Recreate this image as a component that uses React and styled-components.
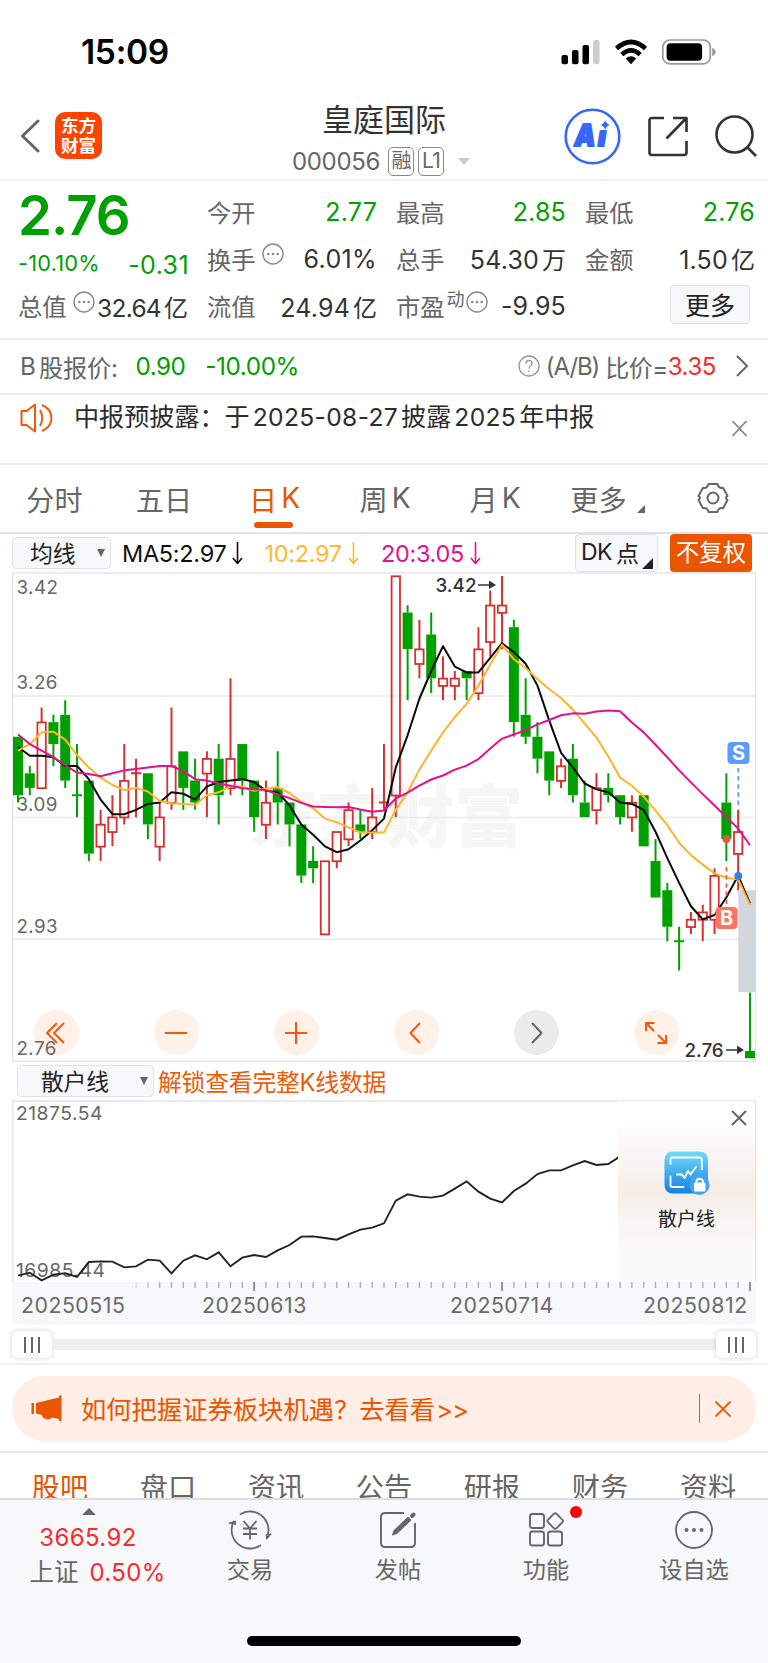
import React from 'react'
import styled, { createGlobalStyle, css } from 'styled-components'

const GREEN = '#00a000'
const RED = '#fa2a2d'
const ORANGE = '#eb5500'
const GRAY = '#666'
const DARK = '#333'

const GlobalStyle = createGlobalStyle`
    * { box-sizing: border-box; }
    body {
        margin: 0;
        background: white;
        font-family: Inter, "Noto Sans CJK SC", sans-serif;
        color: ${DARK};
    }
    svg { display: block; flex: none; }
`

const Page = styled.div`
    width: 768px;
    height: 1663px;
    overflow: hidden;
    display: flex;
    flex-direction: column;
    white-space: nowrap;
`

/* ---------- status bar ---------- */

const StatusBar = styled.div`
    height: 88px;
    flex: none;
    padding: 15px 52px 0 81px;
    display: flex;
    align-items: center;
    justify-content: space-between;
`
const Clock = styled.div`
    font-size: 33.5px;
    font-weight: 600;
    letter-spacing: -0.3px;
    color: black;
`

/* ---------- header ---------- */

const HeaderBar = styled.header`
    height: 93px;
    flex: none;
    border-bottom: 2px solid #f0f0f0;
    display: grid;
    grid-template-columns: 250px 1fr 250px;
`
const HeaderLeft = styled.div`
    display: flex;
    align-items: center;
    padding: 4px 0 0 20px;
    gap: 15px;
`
const AppLogo = styled.div`
    width: 47px;
    height: 47px;
    border-radius: 10px;
    background: #ff4400;
    color: white;
    font-size: 17.5px;
    font-weight: 700;
    line-height: 19.5px;
    padding-top: 4px;
    text-align: center;
`
const Heading = styled.div`
    display: flex;
    flex-direction: column;
    align-items: center;
`
const StockName = styled.div`
    font-size: 31px;
    line-height: 40px;
    margin-top: 12px;
`
const StockCode = styled.div`
    display: flex;
    align-items: center;
    height: 30px;
    margin-top: 6px;
    padding-right: 6px;
    font-size: 24px;
    letter-spacing: -0.3px;
    color: ${GRAY};
`
const Tag = styled.span`
    width: 26px;
    height: 29px;
    margin-left: ${p => p.$gap || 4}px;
    border: 1.5px solid #888;
    border-radius: 5px;
    font-size: ${p => p.$size || 20}px;
    letter-spacing: -0.5px;
    line-height: 26px;
    text-align: center;
`
const Caret = styled.span`
    margin-left: 14px;
    border: 6.5px solid transparent;
    border-top: 7px solid #ccc;
    border-bottom: 0;
`
const HeaderRight = styled.div`
    display: flex;
    align-items: center;
    justify-content: flex-end;
    padding: 5px 11px 0 0;
    gap: 27px;
`

/* ---------- quote ---------- */

const QuoteGrid = styled.section`
    height: 159px;
    flex: none;
    border-bottom: 2px solid #f0f0f0;
    padding: 7px 13px 0 18px;
    display: grid;
    grid-template-columns: 170px repeat(3, 170px);
    column-gap: 19px;
`
const QuoteColumn = styled.div`
    display: grid;
    grid-template-rows: repeat(3, 47.3px);
`
const PriceColumn = styled.div`
    display: grid;
    grid-template-rows: 54px 40.6px 47.3px;
`
const Price = styled.div`
    font-size: 54.5px;
    line-height: 54px;
    font-weight: 600;
    letter-spacing: -1px;
    color: ${GREEN};
`
const ChangeRow = styled.div`
    display: flex;
    justify-content: space-between;
    align-items: center;
    color: ${GREEN};
    font-size: 25px;
    letter-spacing: 0.4px;
    small { font-size: 21.8px; letter-spacing: 0.2px; padding-top: 2px; }
    span { padding-top: 6px; margin-right: -1px; }
`
const Cell = styled.div`
    display: flex;
    justify-content: space-between;
    align-items: center;
`
const Label = styled.span`
    display: flex;
    align-items: center;
    font-size: 24.3px;
    padding-bottom: 1px;
    color: ${GRAY};
    sup { font-size: 18px; margin: -12px 0 0 2px; line-height: 20px; }
    svg { margin: -8px 0 0 ${p => p.$iconGap ?? 6}px; }
`
const Value = styled.span`
    font-size: ${p => p.$size || 25}px;
    letter-spacing: ${p => p.$spacing ?? 0.2}px;
    color: ${p => p.$color || DARK};
    i { font-style: normal; margin-left: 3px; letter-spacing: 0; font-size: 24px; }
`
const MoreButton = styled.button`
    width: 80px;
    height: 39px;
    margin: 2px 5px 0 auto;
    padding: 0 0 2px;
    border: 1.5px solid #dde0e6;
    border-radius: 4px;
    background: #f7f8fa;
    font: 25px "Noto Sans CJK SC", sans-serif;
    color: #222;
`

const BShareRow = styled.section`
    height: 55px;
    flex: none;
    border-bottom: 2px solid #eee;
    padding: 0 19px 1px 20px;
    display: flex;
    align-items: center;
    font-size: 24.3px;
    color: ${GRAY};
`
const BPart = styled.span`
    margin-left: ${p => p.$gap}px;
    letter-spacing: ${p => p.$spacing ?? 0}px;
    color: ${p => p.$color || GRAY};
`
const Ratio = styled.div`
    margin-left: auto;
    display: flex;
    align-items: center;
    font-size: 24px;
    letter-spacing: -0.6px;
`

const Notice = styled.section`
    height: 70px;
    flex: none;
    border-bottom: 2px solid #eee;
    padding: 0 20px;
    display: flex;
    color: #2c2c2c;
    font-size: 25.1px;
    line-height: 45px;
    p { margin: 0 auto 0 20px; }
    time { margin: 0 3px; font-size: 24.6px; letter-spacing: 0.35px; }
`

/* ---------- period tabs ---------- */

const PeriodTabs = styled.nav`
    height: 69px;
    flex: none;
    border-bottom: 2px solid #dfe3e8;
    display: grid;
    grid-template-columns: 109px 110px 111px 110px 110px 108px 110px;
`
const PeriodTab = styled.div`
    position: relative;
    display: flex;
    align-items: center;
    justify-content: center;
    padding: 0 0 1px ${p => p.$shift || 0}px;
    font-size: 28.2px;
    gap: 4px;
    color: ${p => p.$active ? ORANGE : GRAY};
    ${p => p.$active && css`
        &::after {
            content: "";
            position: absolute;
            left: 35px;
            bottom: 4px;
            width: 39px;
            height: 6px;
            border-radius: 3px;
            background: ${ORANGE};
        }
    `}
`
const Corner = styled.i`
    align-self: flex-end;
    border-left: ${p => p.$size}px solid transparent;
    border-bottom: ${p => p.$size}px solid ${p => p.$color};
    margin: 0 0 ${p => p.$lift || 0}px ${p => p.$gap || 0}px;
`

/* ---------- k-line ---------- */

const Toolbar = styled.div`
    height: 38px;
    flex: none;
    padding: 0 16px 0 12px;
    display: flex;
    align-items: center;
`
const Picker = styled.div`
    width: ${p => p.$width}px;
    height: 32px;
    flex: none;
    padding: 0 5px 2px ${p => p.$inset}px;
    display: flex;
    align-items: center;
    justify-content: space-between;
    border: 1.5px solid #dfe2e8;
    border-radius: 4px;
    background: #f7f8fa;
    color: #222;
    font-size: 22.8px;
`
const Down = styled.i`
    border: 4.5px solid transparent;
    border-top: 8px solid #666;
    border-bottom: 0;
    margin-top: 2px;
`
const MaLabel = styled.span`
    display: flex;
    align-items: center;
    margin-left: ${p => p.$gap}px;
    color: ${p => p.$color};
    font-size: 23.5px;
    letter-spacing: ${p => p.$spacing}px;
    svg { margin-left: 6px; }
`
const DkButton = styled.div`
    width: 83px;
    height: 38px;
    margin-left: auto;
    padding: 0 4px 2px 5px;
    display: flex;
    align-items: center;
    border: 1.5px solid #dfe2e8;
    border-radius: 4px;
    background: #f7f8fa;
    font-size: 23px;
    color: #222;
    span { letter-spacing: -0.5px; margin-right: 4px; }
    i { margin-left: auto; }
`
const AdjustButton = styled.div`
    width: 82px;
    height: 38px;
    margin-left: 12px;
    border-radius: 4px;
    background: ${ORANGE};
    color: white;
    font-size: 23.3px;
    line-height: 38px;
    text-align: center;
`
const ChartBox = styled.div`
    position: relative;
    height: 490px;
    flex: none;
`
const NavButtons = styled.div`
    position: absolute;
    left: 33.5px;
    bottom: 7px;
    display: flex;
    gap: 75.1px;
`
const RoundButton = styled.div`
    width: 45px;
    height: 45px;
    border-radius: 50%;
    display: flex;
    align-items: center;
    justify-content: center;
    background: ${p => p.$muted ? 'rgba(120, 120, 120, 0.15)' : 'rgba(255, 85, 0, 0.09)'};
    color: ${p => p.$muted ? '#666' : '#f05a0a'};
`
const SubToolbar = styled.div`
    height: 38px;
    flex: none;
    padding: 0 17px 0 17px;
    display: flex;
    align-items: center;
    gap: 4px;
    font-size: 23.8px;
    letter-spacing: -0.2px;
    color: #f05a0a;
    p { margin: 0; padding-bottom: 2px; }
`
const SubChart = styled.div`
    position: relative;
    height: 182px;
    flex: none;
`
const LockPanel = styled.div`
    position: absolute;
    left: 618px;
    top: 1px;
    width: 137px;
    height: 181px;
    padding: 50px 0 0;
    display: flex;
    flex-direction: column;
    align-items: center;
    gap: 11px;
    background: linear-gradient(#fefefe 12%, #f9f6f4 30%, #f4ede8 50%, #f8f5f2 65%, #fbfbfb 85%);
    color: #222;
    font-size: 19px;
    line-height: 28px;
`
const ClosePanel = styled.div`
    position: absolute;
    right: 21px;
    top: 10px;
`
const DateAxis = styled.div`
    position: relative;
    height: 43px;
    flex: none;
    margin: 0 12px;
    background: #f7f8fa;
`
const Dates = styled.div`
    position: absolute;
    inset: 10px 9px 0 9px;
    display: grid;
    grid-template-columns: 181px 248px 193px 1fr;
    font-size: 21.3px;
    letter-spacing: 0.5px;
    line-height: 27px;
    color: #6a6a6a;
`
const RangeBar = styled.div`
    height: 40px;
    flex: none;
    border-bottom: 2px solid #f0f0f0;
    padding: 1px 12px 0;
    display: flex;
    align-items: center;
`
const Track = styled.div`
    flex: 1;
    height: 11px;
    background: #f0f0f3;
`
const Handle = styled.div`
    width: 40px;
    height: 27px;
    border-radius: 6px;
    background: white;
    box-shadow: 0 0 5px rgba(0, 0, 0, 0.18);
    display: flex;
    align-items: center;
    justify-content: center;
    gap: 5px;
    i { width: 2px; height: 16px; background: #666; }
`

/* ---------- bottom ---------- */

const Banner = styled.div`
    height: 65px;
    flex: none;
    margin: 11px 12px 10px;
    padding: 0 25px 0 19px;
    border-radius: 32px;
    background: #feeee6;
    display: flex;
    align-items: center;
    color: ${ORANGE};
    font-size: 25.3px;
    p { margin: 0 auto 0 19px; padding-bottom: 1px; }
    q { quotes: none; margin-left: 1px; letter-spacing: -0.6px; }
`
const Rule = styled.i`
    width: 1.5px;
    height: 29px;
    margin-right: 15px;
    background: ${ORANGE};
`
const InfoTabs = styled.nav`
    height: 47px;
    flex: none;
    overflow: hidden;
    border-top: 2px solid #e6e8ec;
    padding: 14px 6px 0 6px;
    display: grid;
    grid-template-columns: repeat(7, 108px);
    text-align: center;
    font-size: 28.2px;
    line-height: 42px;
    color: ${GRAY};
    span:first-child { color: ${ORANGE}; }
`
const BottomBar = styled.footer`
    flex: 1;
    border-top: 2px solid #dcdee1;
    background: #f7f8fa;
    display: flex;
    flex-direction: column;
    align-items: center;
    justify-content: space-between;
    padding-bottom: 17px;
`
const Actions = styled.div`
    display: grid;
    grid-template-columns: 176px repeat(4, 148px);
`
const IndexBox = styled.div`
    display: flex;
    flex-direction: column;
    align-items: center;
    padding-top: 8px;
    font-size: 24px;
    letter-spacing: 0.35px;
    line-height: 34px;
    color: ${RED};
    div:last-child { padding-left: 19px; }
    em { font-style: normal; color: ${GRAY}; font-size: 24.5px; margin-right: 11px; letter-spacing: 0; }
`
const Up = styled.i`
    border: 7px solid transparent;
    border-bottom: 7px solid #666;
    border-top: 0;
    margin: 0 0 6px 1px;
`
const Action = styled.div`
    position: relative;
    display: flex;
    flex-direction: column;
    align-items: center;
    padding-top: 10px;
    gap: 4px;
    font-size: 23.2px;
    line-height: 32px;
    color: ${GRAY};
`
const Dot = styled.i`
    position: absolute;
    left: 98px;
    top: 6px;
    width: 12px;
    height: 12px;
    border-radius: 50%;
    background: #f00;
`
const HomeBar = styled.div`
    width: 274px;
    height: 10px;
    border-radius: 5px;
    background: black;
`

// [open, close, high, low] in cents, a trailing 1 marks a flat day drawn as rising
const candles = [
    [320, 312, 320, 311], [315, 313, 316, 312], [313, 322, 324, 313], [322, 319, 323, 316],
    [323, 314, 325, 313], [312, 312, 319, 309], [314, 304, 314, 303], [305, 308, 310, 303],
    [307, 309, 312, 305], [309, 314, 319, 308], [315, 315, 317, 309, 1], [315, 308, 315, 306],
    [305, 309, 311, 303], [311, 316, 324, 310], [318, 313, 318, 310], [314, 311, 317, 310],
    [315, 317, 318, 309], [317, 312, 319, 308], [313, 317, 328, 312], [319, 314, 319, 312],
    [314, 309, 314, 307], [308, 311, 314, 306], [313, 311, 318, 308], [311, 308, 311, 305],
    [308, 301, 308, 300], [303, 302, 305, 300], [293, 303, 303, 293], [303, 307, 307, 302],
    [306, 310, 311, 305], [308, 307, 310, 306], [307, 309, 313, 306], [311, 311, 319, 310, 1],
    [312, 342, 342, 309], [337, 332, 338, 325], [330, 332, 336, 328], [334, 328, 337, 326],
    [327, 328, 331, 325], [327, 328, 329, 325], [329, 328, 329, 325], [326, 332, 335, 325],
    [333, 338, 340, 331], [337, 338, 342, 332], [335, 322, 336, 320], [323, 320, 328, 319],
    [320, 317, 322, 315], [318, 314, 318, 312], [314, 316, 317, 313], [317, 312, 319, 311],
    [311, 309, 314, 309], [310, 313, 315, 308], [313, 312, 315, 311], [312, 309, 312, 308],
    [309, 311, 312, 307], [312, 305, 312, 305], [303, 298, 306, 298], [299, 294, 300, 292],
    [292, 292, 294, 288], [294, 295, 296, 293], [295, 296, 297, 292], [295, 301, 302, 293],
    [311, 306, 315, 303], [304, 307, 310, 299], [277, 276, 285, 276],
]

// averages for the days whose window starts before the first candle
const ma5Head = [318.6, 317.4, 317.4, 317.2]
const ma10Head = [318.1, 319, 320.6, 320.7, 319.6, 317.5, 315.8, 314.4, 313.4]
const ma20Head = [320.3, 319, 318.1, 317.2, 316.1, 315.1, 314.9, 314.6, 315, 315.4, 315.6, 315.8, 316, 316, 315.3, 314.2, 314, 313.6, 313.3]

const retail = [
    647, 638, 661, 644, 640, 651, 606, 604, 605, 622, 619, 599, 602, 640, 602, 586, 598, 577, 619, 593, 585,
    591, 571, 555, 530, 529, 534, 539, 523, 509, 503, 490, 422, 403, 410, 413, 407, 386, 364, 395, 416, 427,
    393, 371, 342, 331, 331, 316, 303, 315, 312, 289,
]

const px = i => 18 + i * 11.806
const py = cents => 4 + (342 - cents) * 7.307

const movingAverage = (n, head) => candles.map((_, i) => {
    if (i < head.length) return head[i]
    return candles.slice(i - n + 1, i + 1).reduce((sum, c) => sum + c[1], 0) / n
})
const toPoints = values => values.map((v, i) => `${px(i)},${py(v)}`).join(' ')

const Candle = ({ i, data }) => {
    const [open, close, high, low, up] = data
    const rising = close > open || up
    const color = rising ? '#d63030' : GREEN
    const x = px(i)
    const top = py(Math.max(open, close))
    const bottom = py(Math.min(open, close))
    if (open === close) {
        return <path d={`M${x} ${py(high)}V${py(low)}M${x - 5} ${top}h10`} stroke={color} strokeWidth="2" />
    }
    return (
        <g stroke={color} strokeWidth="2">
            <path d={`M${x} ${py(high)}V${top}M${x} ${bottom}V${py(low)}`} />
            {rising
                ? <rect x={x - 4.2} y={top + 0.3} width="8.4" height={bottom - top} strokeWidth="1.8" />
                : <rect x={x - 5} y={top} width="10" height={bottom - top} fill={color} stroke="none" />}
        </g>
    )
}

const KLine = () => (
    <svg width="768" height="490" fill="none" fontFamily="Inter">
        <text x="249" y="270" fontSize="68.5" fontWeight="900" fill="#f6f6f6" fontFamily="Noto Sans CJK SC">东方财富</text>
        <path d="M13 124H755M13 245.5H755M13 367.3H755" stroke="#e9ecf1" strokeWidth="1.6" />
        <path d="M12.7 1H755.5V489.3H12.7Z" stroke="#e6e6ea" strokeWidth="1.4" />
        <g fontSize="18.8" fill="#666" letterSpacing="0.4">
            <text x="16.5" y="22">3.42</text>
            <text x="16.5" y="116.5">3.26</text>
            <text x="16.5" y="238.5">3.09</text>
            <text x="16.5" y="361">2.93</text>
            <text x="16.5" y="482.5">2.76</text>
        </g>
        {candles.map((c, i) => <Candle key={i} i={i} data={c} />)}
        <rect x="738.3" y={py(299)} width="17.4" height="102" fill="#d3d6dc" />
        <g strokeWidth="2" strokeLinejoin="round">
            <polyline points={toPoints(movingAverage(5, ma5Head))} stroke="#0a0a0a" />
            <polyline points={toPoints(movingAverage(10, ma10Head))} stroke="#ffb52b" />
            <polyline points={toPoints(movingAverage(20, ma20Head))} stroke="#e3128c" />
        </g>
        <g fontSize="18.8" fill="#333" fontWeight="500">
            <text x="435.5" y="20">3.42</text>
            <text x="684.5" y="485">2.76</text>
        </g>
        <path d="M478 13H492M726 478H740" stroke="#333" strokeWidth="1.5" />
        <path d="M489 8.5L496 13L489 17ZM737 473.5L744 478L737 482Z" fill="#333" />
        <path d="M738.3 196V234" stroke="#5a9cff" strokeWidth="1.8" strokeDasharray="4.5 3.6" />
        <path d="M726.5 295V333" stroke="#ff5a45" strokeWidth="1.8" strokeDasharray="4.5 3.6" />
        <circle cx="726.5" cy="267" r="4" fill="#e2593a" />
        <circle cx="738.3" cy="304" r="4" fill="#3a80e0" />
        <rect x="727.5" y="170" width="22" height="22" rx="4" fill="#5a9dff" />
        <rect x="715.5" y="335" width="22" height="22" rx="4" fill="#ff7361" />
        <g fontSize="20" fontWeight="700" fill="white" textAnchor="middle">
            <text x="738.5" y="188.3">S</text>
            <text x="726.5" y="353.3">B</text>
        </g>
    </svg>
)

const Stroke = ({ w, h, d, width = 2, color = 'currentColor', cap = 'butt', children }) => (
    <svg width={w} height={h} viewBox={`0 0 ${w} ${h}`} fill="none" stroke={color} strokeWidth={width} strokeLinecap={cap} strokeLinejoin="round">
        {d && <path d={d} />}
        {children}
    </svg>
)

const InfoIcon = () => (
    <Stroke w={22} h={22} width={1.4} color="#888">
        <circle cx="11" cy="11" r="10" />
        <g fill="#888" stroke="none">
            <circle cx="6.3" cy="11" r="1.3" />
            <circle cx="11" cy="11" r="1.3" />
            <circle cx="15.7" cy="11" r="1.3" />
        </g>
    </Stroke>
)

const DownArrow = () => <Stroke w={11} h={24} width={1.6} d="M5.5 1V22M1 17L5.5 22.5L10 17" />

const StatusIcons = () => (
    <svg width="155" height="26">
        <rect x="0.5" y="16" width="6.5" height="9.3" rx="2" />
        <rect x="11" y="11" width="6.5" height="14.3" rx="2" />
        <rect x="21.5" y="6" width="6.5" height="19.3" rx="2" />
        <rect x="32" y="1" width="6.5" height="24.3" rx="2" fill="#ccc" />
        <g fill="none" stroke="black" strokeWidth="4.6">
            <path d="M55.5 9.5Q70 -3.5 84.5 9.5" />
            <path d="M60.8 15.6Q70 7.2 79.2 15.6" />
        </g>
        <path d="M64.8 19.5Q70 15 75.2 19.5L70 25.3Z" />
        <rect x="101.8" y="1" width="47.5" height="23.8" rx="7" fill="none" stroke="#999" strokeWidth="1.7" />
        <rect x="105.6" y="4.3" width="35.5" height="17.5" rx="4" />
        <path d="M151.2 8.8Q154.7 10.5 154.7 13T151.2 17.3Z" fill="#999" />
    </svg>
)

const AiIcon = () => (
    <svg width="57" height="57">
        <circle cx="28.5" cy="28.5" r="26.8" fill="none" stroke="#3767fa" strokeWidth="2.6" />
        <g fill="#3767fa" stroke="#3767fa" strokeWidth="2" strokeLinejoin="round" fontFamily="Inter" fontWeight="900" fontStyle="italic">
            <text x="10.5" y="38" fontSize="30" textLength="21" lengthAdjust="spacingAndGlyphs">A</text>
            <text x="34" y="38.3" fontSize="27">ı</text>
        </g>
        <path d="M41.2 12.500Q42.400 15.800 45.400 17Q42.400 18.200 41.200 21.500Q40 18.200 37 17Q40 15.800 41.200 12.500Z" fill="#3767fa" />
    </svg>
)

const LockedChartIcon = () => (
    <svg width="46" height="44">
        <defs>
            <linearGradient id="tile" x1="0" y1="0" x2="0" y2="1">
                <stop offset="0" stopColor="#6fdcfb" />
                <stop offset="1" stopColor="#1380e2" />
            </linearGradient>
        </defs>
        <rect x="0.5" y="0.5" width="43.5" height="42" rx="8" fill="url(#tile)" />
        <g fill="none" stroke="white" strokeWidth="1.8" strokeLinecap="round" strokeLinejoin="round">
            <path d="M6.5 13V8.5Q6.5 6.5 8.5 6.5H35.5Q37.8 6.5 37.8 8.5V18M6.5 25.5V34Q6.5 36 8.5 36H19.5" />
            <path d="M13 23.5H18L20.5 27L24 20L26.5 23.5L32 16" />
        </g>
        <circle cx="35.5" cy="34" r="10" fill="#45a4ef" />
        <rect x="30" y="31.5" width="11.5" height="9" rx="1.5" fill="white" />
        <path d="M32.3 32V30.5Q32.3 28 35.7 28T39 30.5V32" fill="none" stroke="white" strokeWidth="1.8" />
    </svg>
)

const Stat = ({ label, value, unit, color, info, sup, spacing, size, iconGap }) => (
    <Cell>
        <Label $iconGap={iconGap}>{label}{sup && <sup>{sup}</sup>}{info && <InfoIcon />}</Label>
        <Value $color={color} $spacing={spacing} $size={size}>{value}{unit && <i>{unit}</i>}</Value>
    </Cell>
)

const Ticks = () => (
    <svg width="744" height="10">
        {candles.map((_, i) => i > 9 && (
            i === 20 || i === 41 || i === 62
                ? <path key={i} d={`M${px(i) - 12} 0V9`} stroke="#888" strokeWidth="1.8" />
                : <path key={i} d={`M${px(i) - 12} 0V6`} stroke="#aaa" strokeWidth="1.3" opacity={Math.min(1, (i - 9) / 3)} />
        ))}
    </svg>
)

const App = () => {
    return (
        <Page>
            <GlobalStyle />
            <StatusBar>
                <Clock>15:09</Clock>
                <StatusIcons />
            </StatusBar>

            <HeaderBar>
                <HeaderLeft>
                    <Stroke w={20} h={34} width={3} color="#666" cap="round" d="M18 2L2.5 17L18 32" />
                    <AppLogo>东方<br />财富</AppLogo>
                </HeaderLeft>
                <Heading>
                    <StockName>皇庭国际</StockName>
                    <StockCode>
                        000056
                        <Tag $gap={8}>融</Tag>
                        <Tag $size={21}>L1</Tag>
                        <Caret />
                    </StockCode>
                </Heading>
                <HeaderRight>
                    <AiIcon />
                    <Stroke w={40} h={41} width={2.6} color="#333" d="M16 2H4Q1.5 2 1.5 4.5V36.5Q1.5 39 4 39H36Q38.5 39 38.5 36.5V25M25 2H38.5V16M38 2.5L18.5 22.5" />
                    <Stroke w={42} h={42} width={2.6} color="#333" d="M32 32L41 41">
                        <circle cx="19.5" cy="19.5" r="18" />
                    </Stroke>
                </HeaderRight>
            </HeaderBar>

            <QuoteGrid>
                <PriceColumn>
                    <Price>2.76</Price>
                    <ChangeRow><small>-10.10%</small><span>-0.31</span></ChangeRow>
                    <Stat label="总值" value="32.64" unit="亿" info iconGap={6} size={24.5} spacing={-0.7} />
                </PriceColumn>
                <QuoteColumn>
                    <Stat label="今开" value="2.77" color={GREEN} />
                    <Stat label="换手" value="6.01%" info spacing={0.35} />
                    <Stat label="流值" value="24.94" unit="亿" />
                </QuoteColumn>
                <QuoteColumn>
                    <Stat label="最高" value="2.85" color={GREEN} />
                    <Stat label="总手" value="54.30" unit="万" />
                    <Stat label="市盈" sup="动" info iconGap={1} value="-9.95" />
                </QuoteColumn>
                <QuoteColumn>
                    <Stat label="最低" value="2.76" color={GREEN} />
                    <Stat label="金额" value="1.50" unit="亿" />
                    <MoreButton>更多</MoreButton>
                </QuoteColumn>
            </QuoteGrid>

            <BShareRow>
                <BPart $gap={0}>B</BPart>
                <BPart $gap={3} $spacing={-0.3}>股报价:</BPart>
                <BPart $gap={18} $spacing={-0.6} $color={GREEN}>0.90</BPart>
                <BPart $gap={20} $spacing={-0.4} $color={GREEN}>-10.00%</BPart>
                <Ratio>
                    <Stroke w={22} h={22} width={1.4} color="#999" d="M8 8.5Q8 5.5 11 5.5T14 8.5Q14 10 12.5 11T11 13.5M11 15.5V17">
                        <circle cx="11" cy="11" r="10" />
                    </Stroke>
                    <BPart $gap={6} $spacing={-1.1}>(A/B)</BPart>
                    <BPart $gap={6} $spacing={-0.5}>比价=</BPart>
                    <BPart $gap={0} $spacing={-0.4} $color={RED}>3.35</BPart>
                </Ratio>
                <svg width="33" height="24" fill="none" stroke="#666" strokeWidth="2"><path d="M21 2L31 12L21 22" /></svg>
            </BShareRow>

            <Notice>
                <svg width="34" height="46" fill="none" stroke="#f05a0a" strokeWidth="2" strokeLinejoin="round">
                    <path d="M1.5 16H6.5L15 9.5V36.5L6.5 30H1.5ZM20 15Q24.5 23 20 31M22 10Q31.5 14 31.5 23T22 36" />
                </svg>
                <p>中报预披露：于<time>2025-08-27</time>披露<time>2025</time>年中报</p>
                <svg width="17" height="70" stroke="#888" strokeWidth="1.8"><path d="M1.5 26L15.5 41M15.5 26L1.5 41" /></svg>
            </Notice>

            <PeriodTabs>
                <PeriodTab>分时</PeriodTab>
                <PeriodTab>五日</PeriodTab>
                <PeriodTab $active>日<span>K</span></PeriodTab>
                <PeriodTab>周<span>K</span></PeriodTab>
                <PeriodTab>月<span>K</span></PeriodTab>
                <PeriodTab $shift={7}>更多<Corner $size={8} $color="#666" $lift={18} $gap={6} /></PeriodTab>
                <PeriodTab>
                    <Stroke w={32} h={32} width={2} color="#666" d="M11.5 2H20.5Q21.5 6.5 26 5.8L30.5 14Q27.5 16 30.5 18L26 26.2Q21.5 25.5 20.5 30H11.5Q10.5 25.5 6 26.2L1.5 18Q4.5 16 1.5 14L6 5.8Q10.5 6.5 11.5 2Z">
                        <circle cx="16" cy="16" r="5.5" />
                    </Stroke>
                </PeriodTab>
            </PeriodTabs>

            <Toolbar>
                <Picker $width={99} $inset={17}>均线<Down /></Picker>
                <MaLabel $gap={11} $color="#111" $spacing={-0.3}>MA5:2.97<DownArrow /></MaLabel>
                <MaLabel $gap={21} $color="#ffb92e" $spacing={-0.3}>10:2.97<DownArrow /></MaLabel>
                <MaLabel $gap={22} $color="#e3128c" $spacing={-0.3}>20:3.05<DownArrow /></MaLabel>
                <DkButton><span>DK</span>点<Corner $size={11} $color="#222" /></DkButton>
                <AdjustButton>不复权</AdjustButton>
            </Toolbar>

            <ChartBox>
                <KLine />
                <NavButtons>
                    <RoundButton><Stroke w={24} h={22} d="M13 1L3 11L13 21M20 1L10 11L20 21" /></RoundButton>
                    <RoundButton><Stroke w={22} h={22} d="M0 11H22" /></RoundButton>
                    <RoundButton><Stroke w={22} h={22} d="M0 11H22M11 0V22" /></RoundButton>
                    <RoundButton><Stroke w={14} h={22} d="M11 1L1.5 11L11 21" /></RoundButton>
                    <RoundButton $muted><Stroke w={14} h={22} d="M3 1L12.5 11L3 21" /></RoundButton>
                    <RoundButton><Stroke w={24} h={24} d="M2 10V2H10.5M2 2L10 10M13.5 22H22V14M22 22L14 14" /></RoundButton>
                </NavButtons>
            </ChartBox>

            <SubToolbar>
                <Picker $width={137} $inset={23}>散户线<Down /></Picker>
                <p>解锁查看完整K线数据</p>
            </SubToolbar>

            <SubChart>
                <svg width="768" height="182" fill="none">
                    <path d="M12.7 182V1H755.5V182" stroke="#e3e4e9" strokeWidth="1.4" />
                    <g fontFamily="Inter" fontSize="19.3" letterSpacing="0.5" fill="#666">
                        <text x="16" y="20">21875.54</text>
                        <text x="16" y="177">16985.44</text>
                    </g>
                    <polyline points={retail.map((v, i) => `${px(i)},${v / 3 - 40}`).join(' ')} stroke="#222" strokeWidth="1.9" />
                </svg>
                <LockPanel>
                    <LockedChartIcon />
                    散户线
                </LockPanel>
                <ClosePanel><Stroke w={16} h={16} width={2} color="#666" d="M1 1L15 15M15 1L1 15" /></ClosePanel>
            </SubChart>

            <DateAxis>
                <Ticks />
                <Dates>
                    <span>20250515</span>
                    <span>20250613</span>
                    <span>20250714</span>
                    <span>20250812</span>
                </Dates>
            </DateAxis>

            <RangeBar>
                <Handle><i /><i /><i /></Handle>
                <Track />
                <Handle><i /><i /><i /></Handle>
            </RangeBar>

            <Banner>
                <svg width="31" height="27" fill={ORANGE}>
                    <path d="M0.5 8H3V19H0.5ZM5 8L28 2.5V24L20.5 22.5Q19.5 25 15.5 24Q11 23 11 20L5 18.5ZM28 0.5H30.5V26H28Z" />
                </svg>
                <p>如何把握证券板块机遇？去看看<q>&gt;&gt;</q></p>
                <Rule />
                <Stroke w={16} h={16} width={1.8} d="M0.5 0.5L15.5 15.5M15.5 0.5L0.5 15.5" />
            </Banner>

            <InfoTabs>
                <span>股吧</span>
                <span>盘口</span>
                <span>资讯</span>
                <span>公告</span>
                <span>研报</span>
                <span>财务</span>
                <span>资料</span>
            </InfoTabs>

            <BottomBar>
                <Actions>
                    <IndexBox>
                        <Up />
                        <div>3665.92</div>
                        <div><em>上证</em>0.50%</div>
                    </IndexBox>
                    <Action>
                        <Stroke w={44} h={40} width={1.8} d="M12 4.4A18.5 18.5 0 0 1 39.8 25M43 23.5L38.8 28.5V24M33 35A18.5 18.5 0 0 1 6 11M1 13.5L7 11.5V15M15.5 11L22 18.5L28.500 11M22 18.500V29.500M15 18.500H29M15 24H29" />
                        交易
                    </Action>
                    <Action>
                        <Stroke w={38} h={40} width={1.9} d="M25 3H6Q2 3 2 7V33Q2 37 6 37H32Q36 37 36 33V13">
                            <path d="M13.5 25L15 20.5L29 7L32 10L18 23.5Z" fill="#666" strokeWidth="1" />
                            <path d="M33 6L34.500 4.500" strokeWidth="4" strokeLinecap="round" />
                        </Stroke>
                        发帖
                    </Action>
                    <Action>
                        <Stroke w={38} h={40} width={1.9}>
                            <rect x="3" y="4" width="14" height="14" rx="2.500" />
                            <rect x="3" y="21.500" width="14" height="14" rx="2.500" />
                            <rect x="21" y="21.500" width="14" height="14" rx="2.500" />
                            <rect x="22.200" y="5" width="12" height="12" rx="2" transform="rotate(45 28.200 11)" />
                        </Stroke>
                        功能
                        <Dot />
                    </Action>
                    <Action>
                        <Stroke w={40} h={40} width={1.8} color="#666">
                            <circle cx="20" cy="20" r="18" />
                            <g fill="#666" stroke="none">
                                <circle cx="12.5" cy="20" r="2" />
                                <circle cx="20" cy="20" r="2" />
                                <circle cx="27.5" cy="20" r="2" />
                            </g>
                        </Stroke>
                        设自选
                    </Action>
                </Actions>
                <HomeBar />
            </BottomBar>
        </Page>
    )
}

export default App
